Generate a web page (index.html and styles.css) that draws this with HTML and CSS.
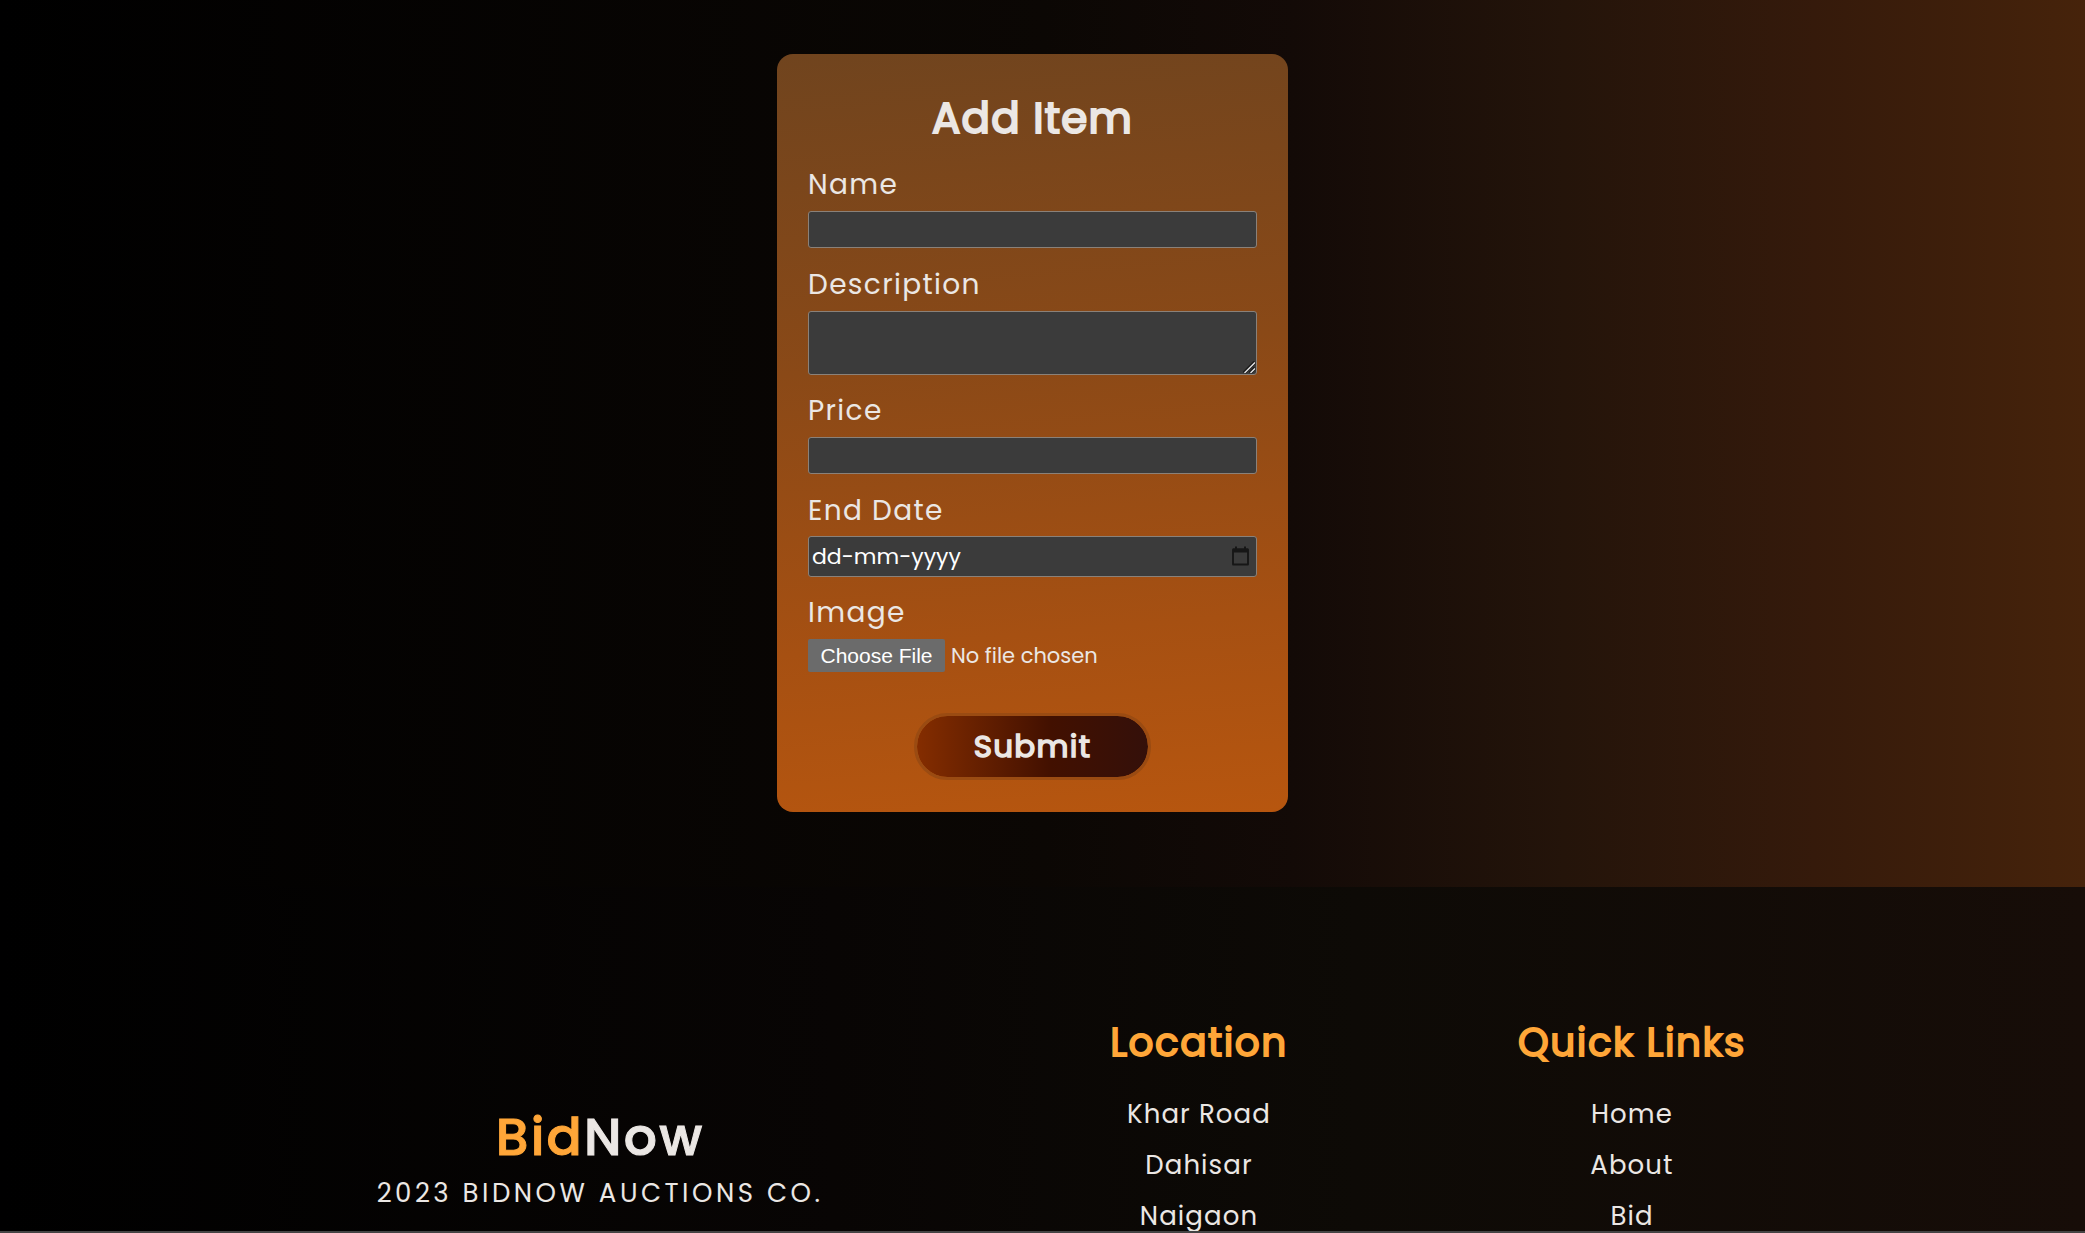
FILE: index.html
```html
<!DOCTYPE html>
<html lang="en">
<head>
<meta charset="utf-8">
<title>BidNow - Add Item</title>
<link rel="stylesheet" href="styles.css">
</head>
<body>
<main class="page">
  <form class="card">
    <h1 class="title">Add Item</h1>
    <div class="field"><label class="label" for="name">Name</label><input class="box" id="name" type="text"></div>
    <div class="field"><label class="label" for="desc">Description</label>
      <div class="area-wrap"><textarea class="box area" id="desc"></textarea>
        <svg class="grip" viewBox="0 0 13 13"><path d="M1 12L12 1M7 12L12 7" stroke="#1c1c1c" stroke-width="3.6"/><path d="M1.5 12L12 1.5M7.5 12L12 7.5" stroke="#e4e4e4" stroke-width="1.4"/></svg>
      </div>
    </div>
    <div class="field"><label class="label" for="price">Price</label><input class="box" id="price" type="text"></div>
    <div class="field field-date"><div class="label">End Date</div>
      <div class="box date"><span>dd-mm-yyyy</span>
        <svg class="calendar" viewBox="0 0 17 20"><path d="M1 3.5h15V18.5H1z" fill="none" stroke="#161616" stroke-width="1.8" stroke-linejoin="round"/><path d="M1 2.5h15v4H1zM3 .5h2v3H3zM12 .5h2v3h-2z" fill="#161616"/></svg>
      </div>
    </div>
    <div class="field"><div class="label">Image</div>
      <div class="file"><button class="choose" type="button">Choose File</button><span class="none">No file chosen</span></div>
    </div>
    <button class="submit" type="button">Submit</button>
  </form>
</main>
<footer class="footer">
  <div class="brand">
    <div class="logo"><span class="bid">Bid</span><span class="now">Now</span></div>
    <div class="tag">2023 BIDNOW AUCTIONS CO.</div>
  </div>
  <div class="col location"><h2>Location</h2><p>Khar Road</p><p>Dahisar</p><p>Naigaon</p></div>
  <div class="col links"><h2>Quick Links</h2><p>Home</p><p>About</p><p>Bid</p></div>
</footer>
</body>
</html>
```
FILE: styles.css
```css
* { box-sizing: border-box; margin: 0; }
body {
  height: 1233px;
  overflow: hidden;
  display: flex;
  flex-direction: column;
  background: #000;
  color: #ebe7e4;
  font-family: Poppins, Inter, "Open Sans", sans-serif;
}
.page {
  flex: none;
  height: 887px;
  padding: 54px 0 0 777px;
  background: linear-gradient(90deg, #000 0%, #0b0704 50%, #130a07 62%, #24140a 75%, #351a0b 87%, #46230b 100%);
}
.card {
  display: flex;
  flex-direction: column;
  width: 511px;
  height: 758px;
  padding: 40px 31px 0;
  border-radius: 16px;
  background: linear-gradient(175deg, #70441e 0%, #8a4917 40%, #a65012 75%, #b7560f 100%);
}
.title { height: 54px; margin-bottom: 16px; line-height: 49px; font-size: 42px; font-weight: 400; letter-spacing: 1.2px; -webkit-text-stroke: 2.1px; text-align: center; }
.field { margin-bottom: 16px; }
.field-date { margin-bottom: 15px; }
.label { display: block; height: 47px; line-height: 41px; font-size: 28px; letter-spacing: 1.35px; }
.box {
  display: block;
  width: 449px;
  height: 37px;
  border: 1px solid #8a8179;
  border-radius: 3px;
  background: #3b3b3b;
  color: #fff;
}
.area-wrap { position: relative; height: 63px; }
.area { height: 64px; resize: none; }
.grip { position: absolute; right: 1px; top: 50px; width: 13px; height: 13px; }
.field-date .label { height: 46px; }
.date { display: flex; align-items: center; justify-content: space-between; height: 41px; padding: 0 7px 0 3px; font-size: 22px; }
.calendar { width: 17px; height: 20px; margin-bottom: 1px; }
.file { display: flex; align-items: center; height: 33px; }
.choose { width: 137px; height: 33px; border: 0; border-radius: 2px; background: #6b6b6b; color: #fff; font: 21px "Liberation Sans", Arial, sans-serif; padding: 0; }
.none { margin-left: 6px; font-size: 21px; }
.submit {
  align-self: center;
  width: 237px;
  height: 67px;
  margin-top: 25px;
  padding: 0;
  border: 3px solid #9a4b12;
  border-radius: 34px;
  background: linear-gradient(90deg, #842d00 0%, #421000 58%, #34100a 100%) padding-box;
  color: #ebe7e4;
  font: 400 31px Poppins, Inter, sans-serif;
  letter-spacing: 1.3px;
  -webkit-text-stroke: 1.5px;
}
.footer {
  flex: none;
  height: 346px;
  display: flex;
  background: linear-gradient(90deg, #000 0%, #080504 40%, #0d0a06 65%, #170d08 100%);
  border-bottom: 2px solid #444;
  overflow: hidden;
}
.brand { width: 1200px; padding-top: 215px; text-align: center; }
.logo { height: 71px; line-height: 70px; font-size: 52px; font-weight: 500; letter-spacing: 2.2px; -webkit-text-stroke: 1px; }
.bid { color: #ffa638; }
.tag { height: 41px; line-height: 41px; font-size: 26px; letter-spacing: 3.5px; }
.col { width: 400px; padding-top: 130px; text-align: center; }
.location { margin-left: -201px; }
.links { margin-left: 33px; }
.col h2 { height: 72px; line-height: 52px; font-size: 39px; font-weight: 400; letter-spacing: 1.5px; -webkit-text-stroke: 1.8px; color: #ffa638; }
.col p { height: 51px; line-height: 51px; font-size: 26px; letter-spacing: 1.1px; }
```
